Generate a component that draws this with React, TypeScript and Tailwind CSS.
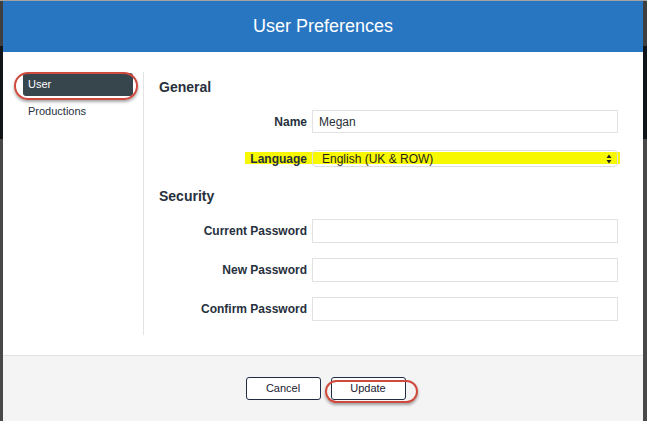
import React from 'react'

const font = { fontFamily: '"Liberation Sans", Arial, sans-serif' }

function Strip({ w }: { w: string }) {
  return (
    <div className={`${w} flex flex-col shrink-0`}>
      <div className="h-[45px] bg-[#3f3f3f]" />
      <div className="h-[93px] bg-[#101519]" />
      <div className="flex-1 bg-[#484848]" />
    </div>
  )
}

function Field({ label, value }: { label: string; value?: string }) {
  return (
    <div className="flex items-center h-[24px]">
      <label className="w-[153px] text-right pr-[5px] text-[12px] font-bold text-[#27303d]">{label}</label>
      <div className="w-[306px] h-full border border-[#e2e2e2] bg-white flex items-center px-[6px] text-[12px] text-[#2a2f36]">
        {value}
      </div>
    </div>
  )
}

export default function App() {
  return (
    <div style={font} className="w-[647px] h-[421px] flex flex-col bg-[#484848] overflow-hidden">
      <div className="h-px bg-[#a3a3a3] shrink-0" />
      <div className="flex flex-1">
        <Strip w="w-[3px]" />
        <div className="w-[640px] flex flex-col">
          <div className="h-[51px] bg-[#2876c2] flex items-center justify-center text-white text-[18px]">
            User Preferences
          </div>

          <div className="bg-white flex pt-[20px] pb-[20px]">
            <div className="w-[141px] border-r border-[#e3e3e3] pl-[20px] pr-[10px] pt-px">
              <div className="relative h-[23px] w-[110px] bg-[#37454d] rounded-[3px] flex items-center pl-[5px] text-white text-[11px]">
                User
                <span className="absolute -left-[9px] -right-[5px] -top-[1px] -bottom-[4px] rounded-full border-2 border-[#cf4a3c] shadow-[0_2px_3px_rgba(0,0,0,0.35)]" />
              </div>
              <div className="mt-[7px] pl-[5px] text-[11px] text-[#27303d]">Productions</div>
            </div>

            <div className="pl-[15px] flex flex-col pb-[14px]">
              <h3 className="mt-[5px] h-[20px] leading-[20px] text-[14px] font-bold text-[#27303d]">General</h3>
              <div className="mt-[13px] flex items-center h-[23px]">
                <label className="w-[153px] text-right pr-[5px] text-[12px] font-bold text-[#27303d]">Name</label>
                <div className="w-[306px] h-full border border-[#e2e2e2] flex items-center px-[6px] text-[12px] text-[#2a2f36]">Megan</div>
              </div>
              <div className="mt-[17px] relative flex items-center h-[17px]">
                <span className="absolute left-[86px] -right-[2px] top-[2px] h-[12px] bg-[#f8f800]" />
                <label className="relative w-[153px] text-right pr-[5px] text-[12px] font-bold text-[#27303d]">Language</label>
                <div className="relative w-[306px] h-full border border-[#dedede] rounded-[4px] flex items-center pl-[9px] pr-[5px] text-[12px] text-[#1f1f1f]">
                  <span className="flex-1">English (UK &amp; ROW)</span>
                  <svg width="6" height="10" viewBox="0 0 6 10">
                    <path d="M3 0.5 L5.5 4 H0.5 Z M3 9.5 L5.5 6 H0.5 Z" fill="#222" />
                  </svg>
                </div>
              </div>
              <h3 className="mt-[19px] h-[20px] leading-[20px] text-[14px] font-bold text-[#27303d]">Security</h3>
              <div className="mt-[13px] flex flex-col gap-[15px]">
                <Field label="Current Password" />
                <Field label="New Password" />
                <Field label="Confirm Password" />
              </div>
            </div>
          </div>

          <div className="flex-1 bg-[#f4f4f4] border-t border-[#e2e2e2] flex items-start justify-center gap-[10px] pt-[21px] pl-[5px]">
            <button className="w-[75px] h-[23px] bg-white border border-[#1f2c44] rounded-[3px] text-[11px] text-[#1b2130]">Cancel</button>
            <div className="relative flex h-[23px]">
              <button className="w-[75px] h-[23px] bg-white border border-[#1f2c44] rounded-[3px] text-[11px] text-[#1b2130]">Update</button>
              <span className="absolute -left-[6px] -right-[12px] top-[3px] -bottom-[3px] rounded-full border-2 border-[#cf4a3c] shadow-[0_2px_3px_rgba(0,0,0,0.35)]" />
            </div>
          </div>
        </div>
        <Strip w="w-[4px]" />
      </div>
    </div>
  )
}
